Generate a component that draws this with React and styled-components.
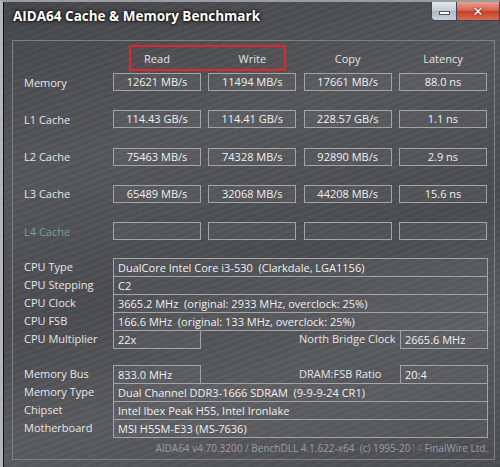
import React from 'react';
import styled, { createGlobalStyle } from 'styled-components';

const GlobalStyle = createGlobalStyle`
  html, body {
    margin: 0;
    padding: 0;
    background: #3c3e42;
  }
  * {
    box-sizing: border-box;
  }
`;

const benchRows = [
  { label: 'Memory', values: ['12621 MB/s', '11494 MB/s', '17661 MB/s', '88.0 ns'] },
  { label: 'L1 Cache', values: ['114.43 GB/s', '114.41 GB/s', '228.57 GB/s', '1.1 ns'] },
  { label: 'L2 Cache', values: ['75463 MB/s', '74328 MB/s', '92890 MB/s', '2.9 ns'] },
  { label: 'L3 Cache', values: ['65489 MB/s', '32068 MB/s', '44208 MB/s', '15.6 ns'] },
  { label: 'L4 Cache', values: ['', '', '', ''], disabled: true },
];

const cpuRows = [
  { label: 'CPU Type', value: 'DualCore Intel Core i3-530  (Clarkdale, LGA1156)' },
  { label: 'CPU Stepping', value: 'C2' },
  { label: 'CPU Clock', value: '3665.2 MHz  (original: 2933 MHz, overclock: 25%)' },
  { label: 'CPU FSB', value: '166.6 MHz  (original: 133 MHz, overclock: 25%)' },
  { label: 'CPU Multiplier', value: '22x', side: 'North Bridge Clock', sideValue: '2665.6 MHz' },
];

const memRows = [
  { label: 'Memory Bus', value: '833.0 MHz', side: 'DRAM:FSB Ratio', sideValue: '20:4' },
  { label: 'Memory Type', value: 'Dual Channel DDR3-1666 SDRAM  (9-9-9-24 CR1)' },
  { label: 'Chipset', value: 'Intel Ibex Peak H55, Intel Ironlake' },
  { label: 'Motherboard', value: 'MSI H55M-E33 (MS-7636)' },
];

const Window = styled.div`
  width: 500px;
  height: 467px;
  display: flex;
  flex-direction: column;
  border-left: 3px solid #b4b6b8;
  box-shadow: inset 1px 0 0 #101010;
  border-top: 2px solid #9a9c9e;
  font-family: "Open Sans", "Noto Sans", sans-serif;
  color: #e8e8e8;
  background:
    repeating-linear-gradient(160deg, rgba(255,255,255,0.025) 0px, rgba(255,255,255,0.025) 2px, rgba(0,0,0,0.02) 3px, rgba(0,0,0,0.02) 6px),
    linear-gradient(165deg, #44464a 0%, #55575b 30%, #4a4c50 55%, #595b5f 75%, #4b4d51 100%);
  overflow: hidden;
`;

const TitleBar = styled.div`
  height: 28px;
  display: flex;
  align-items: flex-start;
  flex-shrink: 0;
`;

const Title = styled.div`
  padding: 5px 0 0 10px;
  font-size: 13.5px;
  font-weight: 700;
  color: #ffffff;
  text-shadow: 0 0 4px #000, 0 0 2px #000;
`;

const Controls = styled.div`
  margin-left: auto;
  display: flex;
  height: 19px;
`;

const CtrlButton = styled.div`
  width: ${(p) => p.$w}px;
  height: 19px;
  display: flex;
  align-items: center;
  justify-content: center;
  border: 1px solid #40464e;
  border-top: none;
  border-left-width: ${(p) => (p.$first ? 1 : 0)}px;
  border-radius: ${(p) => (p.$first ? '0 0 0 4px' : '0')};
  background: ${(p) => p.$bg};
`;

const MinGlyph = styled.div`
  width: 11px;
  height: 4px;
  background: #fff;
  border: 1px solid #505660;
  margin-top: 3px;
`;

const CloseGlyph = styled.div`
  color: #fff;
  font-family: "DejaVu Sans", sans-serif;
  font-weight: 700;
  font-size: 13px;
  line-height: 1;
  text-shadow: 0 0 1px #602018, 0 0 2px #602018;
`;

const Panel = styled.div`
  margin: 10px 5px 0 9px;
  height: 420px;
  border: 1px solid #7e8084;
  padding: 0 6px 0 11px;
  display: flex;
  flex-direction: column;
`;

const BenchGrid = styled.div`
  display: grid;
  grid-template-columns: 81.67px repeat(4, 88px);
  column-gap: 7.33px;
  align-items: center;
`;

const HeaderRow = styled(BenchGrid)`
  position: relative;
  height: 32px;
`;

const ColHead = styled.div`
  text-align: center;
  font-size: 11px;
  color: #e4e4e4;
  padding-top: 2px;
`;

const Highlight = styled.div`
  position: absolute;
  left: 105px;
  top: 4px;
  width: 157px;
  height: 26px;
  border: 2px solid #e3262a;
  pointer-events: none;
`;

const BenchBody = styled(BenchGrid)`
  row-gap: 19.25px;
`;

const RowLabel = styled.div`
  font-size: 11px;
  color: ${(p) => (p.$disabled ? '#7f9e9b' : '#e6e6e6')};
  white-space: nowrap;
`;

const BenchBox = styled.div`
  height: 18px;
  border: 1px solid #a2a4a8;
  background: rgba(255, 255, 255, 0.035);
  font-size: 11px;
  line-height: 16px;
  text-align: center;
  color: #f0f0f0;
  white-space: nowrap;
`;

const InfoSection = styled.div`
  margin-top: ${(p) => p.$top}px;
  display: flex;
  flex-direction: column;
`;

const InfoRow = styled.div`
  display: flex;
  height: 18px;
  align-items: flex-start;
`;

const InfoLabel = styled.div`
  width: 89px;
  flex-shrink: 0;
  height: 18px;
  font-size: 11px;
  line-height: 18px;
  color: #e6e6e6;
  white-space: nowrap;
`;

const ValueBox = styled.div`
  height: 19px;
  width: ${(p) => (p.$w ? `${p.$w}px` : 'auto')};
  flex: ${(p) => (p.$w ? '0 0 auto' : '1')};
  border: 1px solid #a2a4a8;
  background: rgba(255, 255, 255, 0.035);
  padding-left: 4px;
  font-size: 11px;
  line-height: 17px;
  color: #f0f0f0;
  white-space: pre;
  overflow: hidden;
`;

const SideLabel = styled.div`
  flex: 1;
  height: 18px;
  padding-left: 98px;
  font-size: 11px;
  line-height: 18px;
  color: #e6e6e6;
  white-space: nowrap;
`;

const Footer = styled.div`
  height: 21px;
  display: flex;
  align-items: center;
  justify-content: flex-end;
  padding-top: 1px;
  font-size: 10px;
  color: #9c9ea2;
  white-space: pre;
`;

const Faded = styled.span`
  color: #6e7074;
`;

function InfoRows({ rows }) {
  return rows.map((r) => (
    <InfoRow key={r.label}>
      <InfoLabel>{r.label}</InfoLabel>
      {r.side ? (
        <>
          <ValueBox $w={88}>{r.value}</ValueBox>
          <SideLabel>{r.side}</SideLabel>
          <ValueBox $w={88}>{r.sideValue}</ValueBox>
        </>
      ) : (
        <ValueBox>{r.value}</ValueBox>
      )}
    </InfoRow>
  ));
}

export default function App() {
  return (
    <>
      <GlobalStyle />
      <Window>
        <TitleBar>
          <Title>AIDA64 Cache &amp; Memory Benchmark</Title>
          <Controls>
            <CtrlButton $w={26} $first $bg="linear-gradient(#e4e8ee, #c3cad4 50%, #aeb7c4 51%, #c8d0da)">
              <MinGlyph />
            </CtrlButton>
            <CtrlButton $w={43} $bg="linear-gradient(#e8a090, #d6604c 50%, #c4402c 51%, #d86a50)">
              <CloseGlyph>✕</CloseGlyph>
            </CtrlButton>
          </Controls>
        </TitleBar>
        <Panel>
          <HeaderRow>
            <div />
            <ColHead>Read</ColHead>
            <ColHead>Write</ColHead>
            <ColHead>Copy</ColHead>
            <ColHead>Latency</ColHead>
            <Highlight />
          </HeaderRow>
          <BenchBody>
            {benchRows.map((r) => (
              <React.Fragment key={r.label}>
                <RowLabel $disabled={r.disabled}>{r.label}</RowLabel>
                {r.values.map((v, i) => (
                  <BenchBox key={i}>{v}</BenchBox>
                ))}
              </React.Fragment>
            ))}
          </BenchBody>
          <InfoSection $top={18}>
            <InfoRows rows={cpuRows} />
          </InfoSection>
          <InfoSection $top={17}>
            <InfoRows rows={memRows} />
          </InfoSection>
          <Footer>
            AIDA64 v4.70.3200 / BenchDLL 4.1.622-x64  (c) 1995-20<Faded>14</Faded> FinalWire Ltd.
          </Footer>
        </Panel>
      </Window>
    </>
  );
}
